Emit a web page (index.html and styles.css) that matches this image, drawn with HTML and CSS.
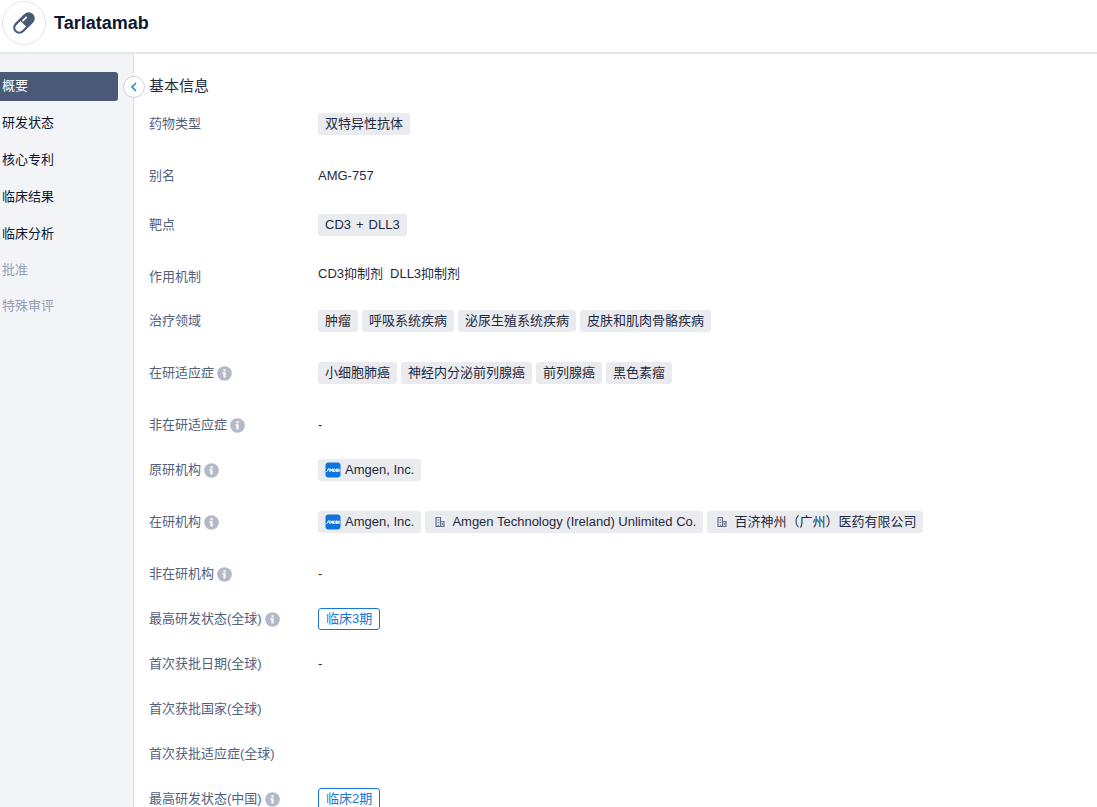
FILE: index.html
```html
<!DOCTYPE html>
<html lang="zh-CN">
<head>
  <meta charset="UTF-8" />
  <meta name="viewport" content="width=device-width, initial-scale=1.0" />
  <title>Tarlatamab</title>
  <link rel="stylesheet" href="styles.css">
</head>
<body>
  <svg class="sprite" aria-hidden="true">
    <symbol id="info" viewBox="0 0 15 15">
      <circle cx="7.5" cy="7.5" r="7.3" fill="#b3b9c7" />
      <path d="M6.4 3.3h2.2v2H6.4zM5.4 6.2h3.2v5.2H6.4V7.8h-1z" fill="#fff" />
    </symbol>
    <symbol id="company" viewBox="0 0 16 16">
      <rect x=".5" y=".5" width="15" height="15" rx="2.5" fill="#eff0f3" stroke="#e5e7ec" />
      <path d="M4 12.5V3.5h4.5v9M8.5 7.5h3.5v5M3.4 12.5h9.2M5.4 6h1.8M5.4 8.5h1.8M6.3 12.4v-1.6M10.3 9v2" fill="none" stroke="#5d6b87" stroke-width="1.2" />
    </symbol>
    <symbol id="amgen" viewBox="0 0 16 16">
      <rect x=".5" y=".5" width="15" height="15" rx="3" fill="#0f75dc" />
      <path d="M1.7 9.8 3.8 6.4l.8 3.2M5 9.8l.6-3 .9 1.7.9-1.7.2 3M10.1 7H8.8l-.3 2.5h1.4l.2-1M12.3 7H11v2.5h1.4M10.9 8.2h1.1M12.8 9.8V7l1.3 2.5V6.6" fill="none" stroke="#fff" stroke-width="1" />
    </symbol>
  </svg>

  <header class="header">
    <div class="drug-icon">
      <svg width="28" height="28" viewBox="0 0 28 28">
        <g transform="rotate(-45 14 14)">
          <rect x="2.4" y="9" width="23.2" height="10" rx="5" fill="#fff" stroke="#4a5975" stroke-width="2.2" />
          <path d="M13 9h7.6a5 5 0 0 1 0 10H13z" fill="#4a5975" />
          <path d="M15 11.6h4.6" stroke="#fff" stroke-width="1.8" stroke-linecap="round" />
        </g>
      </svg>
    </div>
    <h1>Tarlatamab</h1>
  </header>

  <div class="layout">
    <aside class="sidebar">
      <nav>
        <a class="active" href="#overview">概要</a>
        <a href="#status">研发状态</a>
        <a href="#patents">核心专利</a>
        <a href="#results">临床结果</a>
        <a href="#analysis">临床分析</a>
        <a class="disabled" aria-disabled="true">批准</a>
        <a class="disabled" aria-disabled="true">特殊审评</a>
      </nav>
      <button class="collapse" type="button" aria-label="收起">
        <svg width="8" height="10" viewBox="0 0 8 10"><path d="M6 1 2 5l4 4" fill="none" stroke="#1f7fe0" stroke-width="1.5" /></svg>
      </button>
    </aside>

    <main class="content" id="overview">
      <h2>基本信息</h2>
      <dl class="info">
        <div class="row tall">
          <dt>药物类型</dt>
          <dd><span class="chip">双特异性抗体</span></dd>
        </div>
        <div class="row medium">
          <dt>别名</dt>
          <dd>AMG-757</dd>
        </div>
        <div class="row medium">
          <dt>靶点</dt>
          <dd><a class="chip target" href="#"><span>CD3</span> <span>+</span> <span>DLL3</span></a></dd>
        </div>
        <div class="row mechanism">
          <dt>作用机制</dt>
          <dd><span>CD3抑制剂</span><span>DLL3抑制剂</span></dd>
        </div>
        <div class="row tall">
          <dt>治疗领域</dt>
          <dd>
            <span class="chip">肿瘤</span>
            <span class="chip">呼吸系统疾病</span>
            <span class="chip">泌尿生殖系统疾病</span>
            <span class="chip">皮肤和肌肉骨骼疾病</span>
          </dd>
        </div>
        <div class="row tall">
          <dt>在研适应症<svg class="tip"><use href="#info" /></svg></dt>
          <dd>
            <a class="chip" href="#">小细胞肺癌</a>
            <a class="chip" href="#">神经内分泌前列腺癌</a>
            <a class="chip" href="#">前列腺癌</a>
            <a class="chip" href="#">黑色素瘤</a>
          </dd>
        </div>
        <div class="row">
          <dt>非在研适应症<svg class="tip"><use href="#info" /></svg></dt>
          <dd>-</dd>
        </div>
        <div class="row tall">
          <dt>原研机构<svg class="tip"><use href="#info" /></svg></dt>
          <dd><a class="chip" href="#"><svg class="logo"><use href="#amgen" /></svg>Amgen, Inc.</a></dd>
        </div>
        <div class="row tall">
          <dt>在研机构<svg class="tip"><use href="#info" /></svg></dt>
          <dd>
            <a class="chip" href="#"><svg class="logo"><use href="#amgen" /></svg>Amgen, Inc.</a>
            <a class="chip" href="#"><svg class="logo"><use href="#company" /></svg>Amgen Technology (Ireland) Unlimited Co.</a>
            <a class="chip" href="#"><svg class="logo"><use href="#company" /></svg>百济神州（广州）医药有限公司</a>
          </dd>
        </div>
        <div class="row">
          <dt>非在研机构<svg class="tip"><use href="#info" /></svg></dt>
          <dd>-</dd>
        </div>
        <div class="row">
          <dt>最高研发状态(全球)<svg class="tip"><use href="#info" /></svg></dt>
          <dd><span class="phase">临床3期</span></dd>
        </div>
        <div class="row">
          <dt>首次获批日期(全球)</dt>
          <dd>-</dd>
        </div>
        <div class="row">
          <dt>首次获批国家(全球)</dt>
          <dd></dd>
        </div>
        <div class="row">
          <dt>首次获批适应症(全球)</dt>
          <dd></dd>
        </div>
        <div class="row">
          <dt>最高研发状态(中国)<svg class="tip"><use href="#info" /></svg></dt>
          <dd><span class="phase">临床2期</span></dd>
        </div>
      </dl>
    </main>
  </div>
</body>
</html>
```
FILE: styles.css
```css
* {
  box-sizing: border-box;
}
body {
  margin: 0;
  font-family: "Liberation Sans", "Noto Sans CJK SC", sans-serif;
  font-size: 13px;
  line-height: 22px;
  color: #1f2a3f;
  background: #fff;
  min-height: 100vh;
  display: flex;
  flex-direction: column;
}
a {
  color: inherit;
  text-decoration: none;
}
.sprite {
  display: none;
}

.header {
  display: flex;
  align-items: center;
  gap: 8px;
  height: 54px;
  padding: 0 2px 6px;
  border-bottom: 2px solid #e4e6ea;
}
.drug-icon {
  display: flex;
  align-items: center;
  justify-content: center;
  width: 44px;
  height: 44px;
  border: 1px solid #e2e4e9;
  border-radius: 50%;
}
.header h1 {
  margin: 0;
  font-size: 18px;
  color: #0b1730;
}

.layout {
  display: flex;
  flex: 1;
}
.sidebar {
  position: relative;
  flex: none;
  width: 134px;
  padding: 18px 15px 0 0;
  background: #f3f4f7;
  border-right: 1px solid #dfe1e6;
}
.sidebar nav {
  display: flex;
  flex-direction: column;
  gap: 8px;
}
.sidebar nav a {
  padding: 0 0 2px 2px;
  line-height: 27px;
  color: #0b1730;
}
.sidebar nav .active {
  background: #4a5975;
  color: #fff;
  border-radius: 0 3px 3px 0;
}
.sidebar nav .disabled {
  line-height: 26px;
  color: #96a0b3;
}
.collapse {
  position: absolute;
  top: 22px;
  right: -12px;
  display: flex;
  align-items: center;
  justify-content: center;
  width: 22px;
  height: 22px;
  padding: 0;
  background: #fff;
  border: 1px solid #cbd0d9;
  border-radius: 50%;
  cursor: pointer;
}

.content {
  flex: 1;
  min-width: 0;
  padding: 21px 15px 0;
}
.content h2 {
  margin: 0;
  font-size: 15px;
  font-weight: normal;
}
.info {
  margin: 16px 0 0;
}
.row {
  display: flex;
  min-height: 45px;
}
.row.medium {
  min-height: 49px;
}
.row.tall {
  min-height: 52px;
}
.row.mechanism {
  min-height: 47px;
}
.row dt {
  display: flex;
  align-items: center;
  flex: none;
  gap: 3px;
  width: 169px;
  height: 22px;
  color: #53617d;
}
.row dd {
  display: flex;
  flex-wrap: wrap;
  align-items: flex-start;
  gap: 4px;
  margin: 0;
}
.mechanism dt {
  margin-top: 3px;
}
.mechanism dd {
  gap: 7px;
}
.tip {
  width: 15px;
  height: 15px;
}
.chip {
  display: flex;
  align-items: center;
  gap: 4px;
  height: 22px;
  padding: 0 7px;
  background: #e9ebef;
  border-radius: 3px;
}
.chip.target {
  gap: 5px;
}
.logo {
  width: 16px;
  height: 16px;
}
.phase {
  height: 22px;
  padding: 0 7px;
  line-height: 20px;
  color: #1976d8;
  border: 1px solid #1976d8;
  border-radius: 3px;
}
```
